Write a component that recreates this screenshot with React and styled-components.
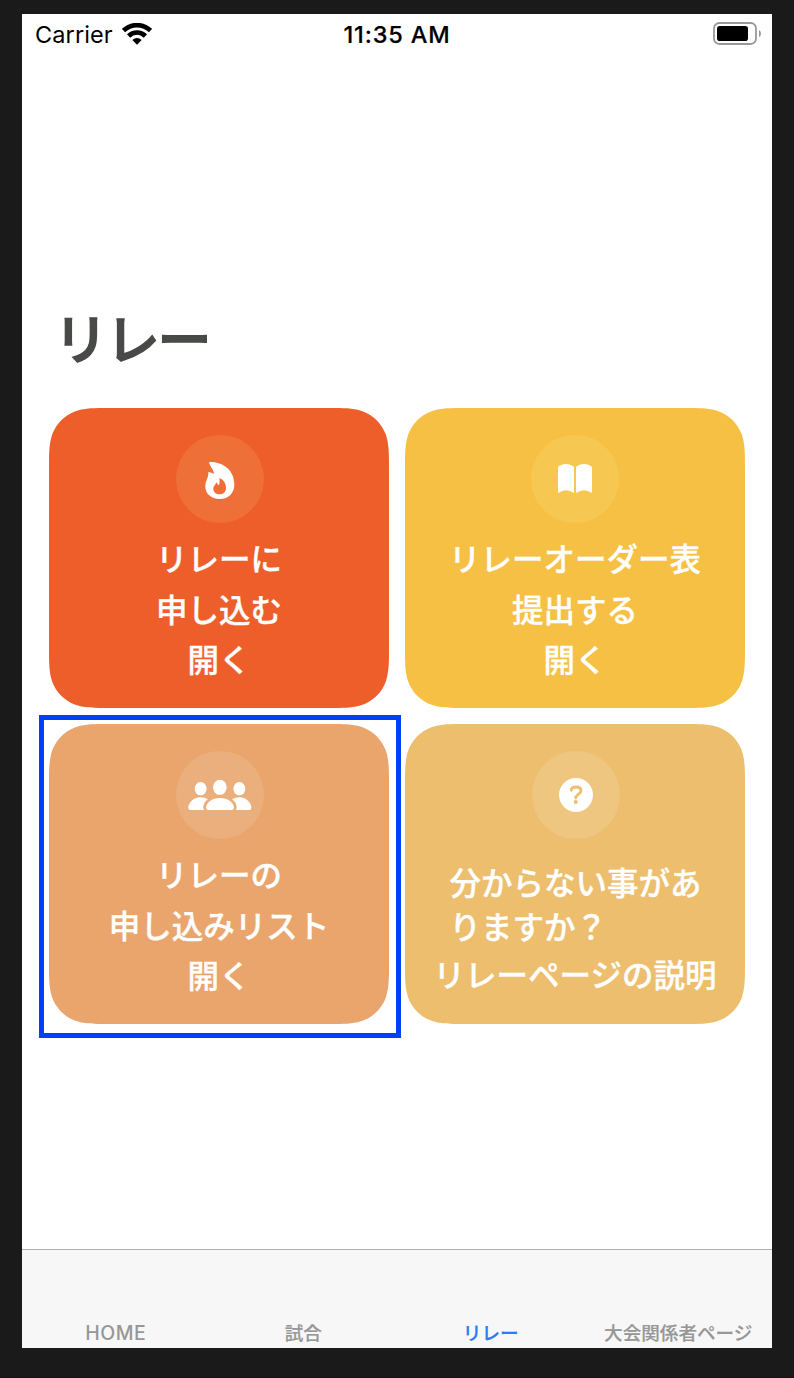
import React from "react";
import styled, { createGlobalStyle } from "styled-components";

const GlobalStyle = createGlobalStyle`
  * { box-sizing: border-box; }
  body {
    margin: 0;
    background: #1a1a1a;
    font-family: Inter, "Noto Sans CJK JP", sans-serif;
  }
`;

// Outline of a rectangle whose corners curve in continuously.
const smoothRect = (w, h, r) => {
  const curve = [
    [1.4, 0], [1.08, 0], [0.868407, 0], [0.669934, 0.065496],
    [0.631494, 0.074911], [0.372824, 0.169059], [0.169059, 0.372824],
    [0.074911, 0.631494], [0, 0.868407], [0, 1.08], [0, 1.4],
  ];
  const corner = (right, bottom) =>
    curve.map(([x, y]) => {
      const px = right ? w - x * r : x * r;
      const py = bottom ? h - y * r : y * r;
      return `${px.toFixed(2)} ${py.toFixed(2)}`;
    });
  const forward = (p) =>
    `${p[0]} C ${p[1]} ${p[2]} ${p[3]} L ${p[4]} C ${p[5]} ${p[6]} ${p[7]} C ${p[8]} ${p[9]} ${p[10]}`;
  const backward = (p) =>
    `${p[10]} C ${p[9]} ${p[8]} ${p[7]} C ${p[6]} ${p[5]} ${p[4]} L ${p[3]} C ${p[2]} ${p[1]} ${p[0]}`;
  return [
    `M ${forward(corner(true, false))}`,
    `L ${backward(corner(true, true))}`,
    `L ${forward(corner(false, true))}`,
    `L ${backward(corner(false, false))} Z`,
  ].join(" ");
};

const cardShape = smoothRect(340, 300, 42);

const Desktop = styled.div`
  height: 1378px;
  padding: 14px 22px 0;
  background: #1a1a1a;
  border-bottom: 1px solid #131113;
`;

const Phone = styled.main`
  display: flex;
  flex-direction: column;
  width: 750px;
  height: 1334px;
  background: #fff;
`;

const StatusBar = styled.header`
  display: grid;
  grid-template-columns: 1fr auto 1fr;
  align-items: center;
  height: 40px;
  padding: 0 11px 0 13px;
  font-size: 23.5px;
  color: #000;
`;

const Carrier = styled.div`
  display: flex;
  align-items: center;
  gap: 9px;
  padding-top: 1px;
  line-height: 40px;
  letter-spacing: 0.1px;
  svg { display: block; margin-bottom: 2px; }
`;

const Clock = styled.time`
  padding-top: 1px;
  margin-left: -2px;
  line-height: 40px;
  font-weight: 500;
  letter-spacing: 0.85px;
  -webkit-text-stroke: 0.2px #000;
`;

const Battery = styled.div`
  display: flex;
  justify-content: flex-end;
  padding-bottom: 2px;
  svg { display: block; }
`;

const Content = styled.section`
  flex: 1;
  padding: 243px 27px 0;
`;

const Title = styled.h1`
  margin: 0 0 31px 5px;
  font-family: "Noto Sans CJK JP", sans-serif;
  font-size: 54px;
  line-height: 80px;
  font-weight: 500;
  letter-spacing: -2.2px;
  -webkit-text-stroke: 1.6px #484a48;
  color: #484a48;
`;

const CardGrid = styled.div`
  display: grid;
  grid-template-columns: 340px 340px;
  gap: 16px;
`;

const Card = styled.div`
  position: relative;
  height: 300px;
`;

const CardSurface = styled.div`
  display: flex;
  flex-direction: column;
  align-items: center;
  height: 100%;
  padding-top: 27px;
  background: ${(p) => p.$color};
  clip-path: path("${cardShape}");
  color: #fff;
  font-family: "Noto Sans CJK JP", sans-serif;
  font-size: 31.5px;
  font-weight: 500;
  -webkit-text-stroke: 0.35px #fff;
`;

const IconDisc = styled.div`
  width: 88px;
  height: 88px;
  margin-left: ${(p) => p.$shift || 0}px;
  border-radius: 50%;
  background: ${(p) => p.$color};
  svg { display: block; }
`;

const Lines = styled.div`
  margin-top: 9px;
  line-height: 50.7px;
  text-align: center;
  white-space: nowrap;
`;

const Question = styled.div`
  width: 253px;
  margin: 20px 0 0 2px;
  line-height: 44px;
  word-break: break-all;
`;

const Caption = styled.div`
  line-height: 52px;
  white-space: nowrap;
`;

const Highlight = styled.div`
  position: absolute;
  inset: -9px -12px -14px -10px;
  border: 5px solid #0040fa;
  pointer-events: none;
`;

const TabBar = styled.nav`
  display: grid;
  grid-template-columns: repeat(4, 1fr);
  align-items: end;
  height: 99px;
  border-top: 1px solid #b0b0b0;
  background: #f7f7f7;
`;

const Tab = styled.a`
  text-align: center;
  white-space: nowrap;
  font-size: ${(p) => (p.$latin ? "19.5px" : "18.6px")};
  line-height: 30px;
  letter-spacing: ${(p) => (p.$latin ? "0.5px" : "0")};
  font-weight: 500;
  -webkit-text-stroke: ${(p) => (p.$latin ? "0" : "0.2px")};
  color: ${(p) => (p.$active ? "#2b7cf6" : "#979797")};
`;

const WifiIcon = () => (
  <svg width="30" height="22" viewBox="0 0 30 22" fill="none">
    <path d="M1.5 7.6A19.3 19.3 0 0 1 28.5 7.6" stroke="#000" strokeWidth="4.6" />
    <path d="M6.6 13A12 12 0 0 1 23.4 13" stroke="#000" strokeWidth="4.6" />
    <path d="M10.3 17.1Q15 13.1 19.7 17.1L15 21.8Z" fill="#000" />
  </svg>
);

const BatteryIcon = () => (
  <svg width="48" height="23" viewBox="0 0 48 23">
    <rect x="1" y="1" width="42" height="21" rx="5.2" fill="none" stroke="#999" strokeWidth="1.8" />
    <rect x="4" y="4" width="31" height="15" rx="2.8" fill="#000" />
    <path d="M46 8Q48 9 48 11.500Q48 14 46 15Z" fill="#999" />
  </svg>
);

const Glyph = ({ children }) => (
  <svg width="88" height="88" viewBox="0 0 264 264" fill="#fff">{children}</svg>
);

const FlameIcon = () => (
  <Glyph>
    <path
      fillRule="evenodd"
      d="M103 81C145 81 175 109 175 148C175 175 158 192 131 192C104 192 88 176 88 154C88 137 98 130 97 111C104 111 109 114 114 117C114 105 103 94 100 86C99 83 100 81 103 81ZM130 129C132 139 130 145 129 151C125 149 123 145 121 142C120 149 112 152 112 161C112 171 120 178 131 178C143 178 150 170 150 159C150 145 143 134 130 129Z"
    />
  </Glyph>
);

const BookIcon = () => (
  <Glyph>
    <path d="M81 98Q81 95 84 93Q105 81 126 93Q129 95 129 98V174Q106 158 81 174Z" />
    <path d="M135 98Q135 95 138 93Q159 81 180 93Q183 95 183 98V174Q159 158 135 174Z" />
  </Glyph>
);

const PeopleIcon = () => (
  <Glyph>
    <ellipse cx="74" cy="113" rx="18" ry="20" />
    <ellipse cx="131.500" cy="109" rx="20.500" ry="22.500" />
    <ellipse cx="190" cy="113" rx="18" ry="20" />
    <path d="M43 177Q37 177 37 170C37 154 54 139 74 139Q86 139 96 145C86 152 78 165 84 177Z" />
    <path d="M220 177Q226 177 226 170C226 154 209 139 190 139Q178 139 168 145C178 152 186 165 180 177Z" />
    <path d="M97 177Q90 177 90 170C90 156 108 141 132 141C156 141 174 156 174 170Q174 177 167 177Z" />
  </Glyph>
);

const HelpIcon = ({ ink }) => (
  <Glyph>
    <circle cx="132" cy="132" r="51" />
    <path
      d="M118 118C118 111 124 108 132 108C141 108 147 112 147 119C147 130 131 130 131 141"
      fill="none"
      stroke={ink}
      strokeWidth="8.500"
      strokeLinecap="round"
    />
    <circle cx="131" cy="153" r="6" fill={ink} />
  </Glyph>
);

const MenuCard = ({ color, disc, shift, icon, highlighted, children }) => (
  <Card>
    <CardSurface $color={color}>
      <IconDisc $color={disc} $shift={shift}>{icon}</IconDisc>
      {children}
    </CardSurface>
    {highlighted && <Highlight />}
  </Card>
);

export default function App() {
  return (
    <Desktop>
      <GlobalStyle />
      <Phone>
        <StatusBar>
          <Carrier>
            Carrier <WifiIcon />
          </Carrier>
          <Clock>11:35 AM</Clock>
          <Battery>
            <BatteryIcon />
          </Battery>
        </StatusBar>
        <Content>
          <Title>リレー</Title>
          <CardGrid>
            <MenuCard color="#ed5e2b" disc="#ee7038" shift={1} icon={<FlameIcon />}>
              <Lines>
                リレーに<br />申し込む<br />開く
              </Lines>
            </MenuCard>
            <MenuCard color="#f6c044" disc="#f6c851" icon={<BookIcon />}>
              <Lines>
                リレーオーダー表<br />提出する<br />開く
              </Lines>
            </MenuCard>
            <MenuCard color="#e9a56c" disc="#ebaf7d" shift={1} icon={<PeopleIcon />} highlighted>
              <Lines>
                リレーの<br />申し込みリスト<br />開く
              </Lines>
            </MenuCard>
            <MenuCard color="#ecbe6e" disc="#efc680" shift={2} icon={<HelpIcon ink="#ecbe6e" />}>
              <Question>分からない事がありますか？</Question>
              <Caption>リレーページの説明</Caption>
            </MenuCard>
          </CardGrid>
        </Content>
        <TabBar>
          <Tab $latin>HOME</Tab>
          <Tab>試合</Tab>
          <Tab $active>リレー</Tab>
          <Tab>大会関係者ページ</Tab>
        </TabBar>
      </Phone>
    </Desktop>
  );
}
